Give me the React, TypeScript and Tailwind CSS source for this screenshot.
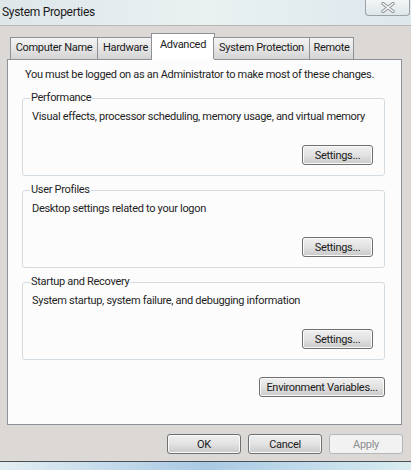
import React from "react";

const font = { fontFamily: 'Roboto, "Liberation Sans", sans-serif' };

function WinButton({
  label,
  width,
  disabled,
}: {
  label: string;
  width: string;
  disabled?: boolean;
}) {
  return (
    <button
      className={
        disabled
          ? `${width} h-[20px] rounded-[3px] border border-[#b4b7ba] bg-[#f2f2f2] text-[11px] tracking-[-0.3px] leading-none whitespace-nowrap text-[#8d8d8d]`
          : `${width} h-[20px] rounded-[3px] border border-[#6f6f6f] bg-gradient-to-b from-[#f0f0f0] via-[#e2e2e2] to-[#c9c9c9] text-[11px] tracking-[-0.3px] leading-none whitespace-nowrap text-[#1a1a1a] shadow-[inset_0_0_0_1px_#fafafa]`
      }
    >
      {label}
    </button>
  );
}

function GroupBox({ title, text }: { title: string; text: string }) {
  return (
    <fieldset className="min-w-0 rounded-[3px] border border-[#d3dbe0] pl-[9px] pr-[11px]">
      <legend className="ml-[-2px] px-[1px] text-[11px] tracking-[-0.3px] leading-[14px] whitespace-nowrap text-[#1e1e1e]">
        {title}
      </legend>
      <div className="mt-[5px] text-[11px] tracking-[-0.3px] leading-[14px] whitespace-nowrap text-[#1e1e1e]">
        {text}
      </div>
      <div className="mt-[21px] mb-[10px] flex justify-end">
        <WinButton label="Settings..." width="w-[71px]" />
      </div>
    </fieldset>
  );
}

const TABS = [
  { label: "Computer Name", w: "w-[87px]" },
  { label: "Hardware", w: "w-[56px]" },
  { label: "Advanced", w: "w-[64px]", active: true },
  { label: "System Protection", w: "w-[96px]" },
  { label: "Remote", w: "w-[45px]" },
];

export default function App() {
  return (
    <div
      className="w-[411px] h-[470px] overflow-hidden bg-[#dbd8d5] flex flex-col"
      style={font}
    >
      {/* glass title bar */}
      <div className="h-[25px] shrink-0 flex items-start justify-between bg-gradient-to-r from-[#dfe6ea] via-[#e9f1f1] to-[#dde7ec]">
        <div className="pl-[2px] pt-[4px] text-[12px] tracking-[-0.3px] leading-[16px] text-[#1b1b1b]">
          System Properties
        </div>
        <div className="mr-[1px] w-[45px] h-[16px] rounded-b-[4px] border border-t-0 border-[#9aa3a8] bg-gradient-to-b from-[#f3f6f7] to-[#dfe5e8] flex items-center justify-center">
          <svg width="14" height="11" viewBox="0 0 14 11">
            <path d="M2 1.5 L12 9.5 M12 1.5 L2 9.5" stroke="#8b9297" strokeWidth="3.4" strokeLinecap="round" />
            <path d="M2 1.5 L12 9.5 M12 1.5 L2 9.5" stroke="#fbfbfb" strokeWidth="1.6" strokeLinecap="round" />
          </svg>
        </div>
      </div>

      <div className="flex-1 border-t border-[#b9b7b4] flex flex-col pl-[7px] pr-[9px]">
        {/* tabs */}
        <div className="h-[33px] flex items-end pl-[3px] relative z-10">
          {TABS.map((t) =>
            t.active ? (
              <div
                key={t.label}
                className={`${t.w} h-[27px] -mx-[2px] mb-[-1px] px-[2px] border border-b-0 border-[#8e9298] bg-white text-[11px] tracking-[-0.3px] leading-[22px] text-center whitespace-nowrap text-[#1b1b1b]`}
              >
                {t.label}
              </div>
            ) : (
              <div
                key={t.label}
                className={`${t.w} h-[22px] border border-b-0 border-[#8e9298] border-r-0 last:border-r bg-gradient-to-b from-[#f3f3f3] via-[#e6e6e6] to-[#d3d3d3] text-[11px] tracking-[-0.3px] leading-[20px] text-center whitespace-nowrap text-[#1b1b1b]`}
              >
                {t.label}
              </div>
            )
          )}
        </div>

        {/* panel */}
        <div className="h-[366px] border border-[#8e9298] bg-[#fcfcfc] pl-[14px] pr-[16px] pt-[8px]">
          <div className="pl-[3px] text-[11px] tracking-[-0.3px] leading-[14px] whitespace-nowrap text-[#1e1e1e]">
            You must be logged on as an Administrator to make most of these changes.
          </div>
          <div className="mt-[9px] flex flex-col gap-[7px]">
            <GroupBox
              title="Performance"
              text="Visual effects, processor scheduling, memory usage, and virtual memory"
            />
            <GroupBox title="User Profiles" text="Desktop settings related to your logon" />
            <GroupBox
              title="Startup and Recovery"
              text="System startup, system failure, and debugging information"
            />
          </div>
          <div className="mt-[17px] flex justify-end">
            <WinButton label="Environment Variables..." width="w-[126px]" />
          </div>
        </div>

        {/* dialog buttons */}
        <div className="mt-[9px] flex justify-end gap-[7px] mr-[-1px]">
          <WinButton label="OK" width="w-[74px]" />
          <WinButton label="Cancel" width="w-[74px]" />
          <WinButton label="Apply" width="w-[74px]" disabled />
        </div>
      </div>

      {/* desktop strip below the window */}
      <div className="h-[9px] shrink-0 border-t border-[#4a5056] bg-gradient-to-r from-[#e3eef2] via-[#a9c9e4] to-[#d9edf0]" />
    </div>
  );
}
